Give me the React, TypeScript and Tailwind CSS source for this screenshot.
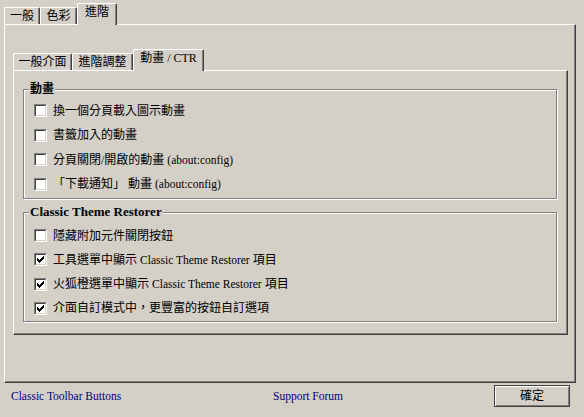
import React from "react";

function Tab({ label, wClass, selected }: { label: string; wClass: string; selected?: boolean }) {
  if (selected) {
    return (
      <div
        className={`relative z-10 -mb-px flex h-[22px] ${wClass} justify-center rounded-t-[2px] border-l border-r border-t border-l-white border-t-white border-r-[#404040] bg-[#d4d0c8] pt-[2px] text-[12px] leading-[12px] shadow-[inset_-1px_0_0_#808080] whitespace-nowrap`}
      >
        {label}
      </div>
    );
  }
  return (
    <div
      className={`flex h-[17px] ${wClass} justify-center rounded-t-[2px] border-l border-r border-t border-l-white border-t-white border-r-[#404040] bg-[#d4d0c8] pt-[2px] text-[12px] leading-[12px] shadow-[inset_-1px_0_0_#808080] whitespace-nowrap`}
    >
      {label}
    </div>
  );
}

function CheckBox({ checked }: { checked?: boolean }) {
  return (
    <div className="h-[13px] w-[13px] shrink-0 border border-b-white border-l-[#808080] border-r-white border-t-[#808080]">
      <div className="h-[11px] w-[11px] border border-b-[#d4d0c8] border-l-[#404040] border-r-[#d4d0c8] border-t-[#404040] bg-white">
        {checked && (
          <svg width="9" height="9" viewBox="0 0 9 9" className="block">
            <polyline points="1.5,3.5 3.5,5.5 7.5,1.5" fill="none" stroke="#000" strokeWidth="1" shapeRendering="crispEdges" />
            <polyline points="1.5,4.5 3.5,6.5 7.5,2.5" fill="none" stroke="#000" strokeWidth="1" shapeRendering="crispEdges" />
            <polyline points="1.5,5.5 3.5,7.5 7.5,3.5" fill="none" stroke="#000" strokeWidth="1" shapeRendering="crispEdges" />
          </svg>
        )}
      </div>
    </div>
  );
}

function Row({ checked, children }: { checked?: boolean; children: React.ReactNode }) {
  return (
    <div className="flex h-[13px] items-center gap-[6px]">
      <CheckBox checked={checked} />
      <span className="whitespace-nowrap text-[12px] leading-[14px]">{children}</span>
    </div>
  );
}

function L({ children }: { children: React.ReactNode }) {
  return <span className="text-[11.5px]">{children}</span>;
}

export default function App() {
  return (
    <div className="flex h-[417px] w-[584px] flex-col overflow-hidden bg-[#d4d0c8] font-['Liberation_Serif','Noto_Sans_CJK_TC',serif] text-black">
      {/* outer tabs */}
      <div className="flex h-[24px] items-end pl-[4px] pt-[3px]">
        <Tab label="一般" wClass="w-[36px]" />
        <Tab label="色彩" wClass="w-[37px]" />
        <Tab label="進階" wClass="w-[40px]" selected />
      </div>

      {/* outer panel */}
      <div className="ml-[4px] h-[359px] w-[572px] border-b border-l border-r border-t border-b-[#404040] border-l-white border-r-[#404040] border-t-white pl-[8px] pt-[24px] shadow-[inset_-1px_-1px_0_#808080]">
        <div className="flex h-[21px] items-end">
          <Tab label="一般介面" wClass="w-[59px]" />
          <Tab label="進階調整" wClass="w-[61px]" />
          <Tab label="動畫 / CTR" wClass="w-[71px]" selected />
        </div>

        {/* inner panel */}
        <div className="h-[265px] w-[555px] border-b border-l border-r border-t border-b-[#404040] border-l-white border-r-[#404040] border-t-white pl-[9px] pt-[18px] shadow-[inset_-1px_-1px_0_#808080]">
          <div className="relative h-[110px] w-[534px] border border-[#808080] pl-[10px] pt-[14px] shadow-[inset_1px_1px_0_#fff,1px_1px_0_#fff]">
            <div className="absolute -top-[8px] left-[5px] bg-[#d4d0c8] px-[1px] text-[12px] font-bold leading-[14px]">
              動畫
            </div>
            <div className="flex flex-col gap-[11.5px]">
              <Row>換一個分頁載入圖示動畫</Row>
              <Row>書籤加入的動畫</Row>
              <Row>
                分頁關閉/開啟的動畫 <L>(about:config)</L>
              </Row>
              <Row>
                「下載通知」 動畫 <L>(about:config)</L>
              </Row>
            </div>
          </div>

          <div className="relative mt-[13px] h-[110px] w-[534px] border border-[#808080] pl-[10px] pt-[16px] shadow-[inset_1px_1px_0_#fff,1px_1px_0_#fff]">
            <div className="absolute -top-[8px] left-[5px] bg-[#d4d0c8] px-[1px] text-[13px] font-bold leading-[14px]">
              Classic Theme Restorer
            </div>
            <div className="flex flex-col gap-[11.3px]">
              <Row>隱藏附加元件關閉按鈕</Row>
              <Row checked>
                工具選單中顯示 <L>Classic Theme Restorer</L> 項目
              </Row>
              <Row checked>
                火狐橙選單中顯示 <L>Classic Theme Restorer</L> 項目
              </Row>
              <Row checked>介面自訂模式中，更豐富的按鈕自訂選項</Row>
            </div>
          </div>
        </div>
      </div>

      {/* bottom bar */}
      <div className="flex h-[34px] items-start">
        <div className="w-[273px] pl-[11px] pt-[6px] text-[11.5px] leading-[14px] text-[#000080]">
          Classic Toolbar Buttons
        </div>
        <div className="flex-1 pt-[6px] text-[11.5px] leading-[14px] text-[#000080]">Support Forum</div>
        <div className="mr-[14px] mt-[2px] flex h-[22px] w-[76px] items-center justify-center border border-[#404040] text-[12px] leading-[14px] shadow-[inset_1px_1px_0_#fff,inset_-1px_-1px_0_#808080]">
          確定
        </div>
      </div>
    </div>
  );
}
